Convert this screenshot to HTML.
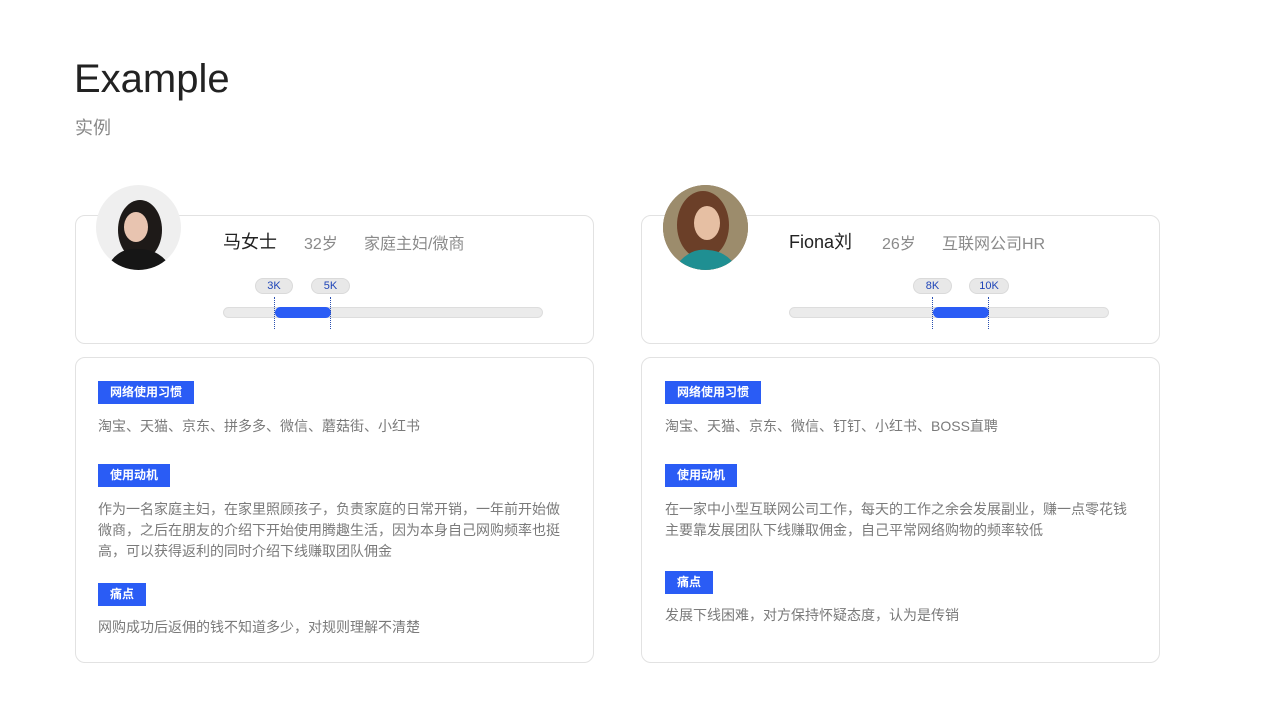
<!DOCTYPE html>
<html><head><meta charset="utf-8"><style>
*{margin:0;padding:0;box-sizing:border-box}
body{width:1280px;height:718px;background:#fff;position:relative;overflow:hidden;font-family:"Liberation Sans","Noto Sans CJK SC",sans-serif}
.a{position:absolute;white-space:nowrap}
.card{position:absolute;border:1px solid #e2e2e2;border-radius:10px;background:#fff}
.av{position:absolute;width:85px;height:85px;border-radius:50%;overflow:hidden}
.name{font-size:18px;color:#222}
.g{font-size:16px;color:#8a8a8a}
.track{position:absolute;height:11px;border-radius:6px;background:#ebebeb;border:1px solid #ddd}
.bar{position:absolute;height:11px;border-radius:6px;background:#2a5cf5}
.pill{position:absolute;height:16px;border-radius:8px;background:#e8e8e8;border:1px solid #dadada;color:#1f45b8;font-size:11px;line-height:14px;text-align:center}
.dl{position:absolute;width:0;border-left:1px dotted #2a4fb0;height:32px;top:297px}
.tag{position:absolute;height:23px;background:#2a5cf5;color:#fff;font-size:12px;line-height:23px;padding:0 12px;white-space:nowrap;font-weight:bold}
.t{position:absolute;font-size:14px;color:#7a7a7a;line-height:21px;white-space:nowrap}
</style></head><body>
<div class="a" style="left:74px;top:57px;font-size:40px;color:#222">Example</div>
<div class="a" style="left:75px;top:114px;font-size:18px;color:#888">实例</div>

<div class="card" style="left:75px;top:215px;width:519px;height:129px"></div>
<div class="card" style="left:75px;top:357px;width:519px;height:306px"></div>
<div class="card" style="left:641px;top:215px;width:519px;height:129px"></div>
<div class="card" style="left:641px;top:357px;width:519px;height:306px"></div>

<div class="av" style="left:96px;top:185px;background:#efefef">
<svg width="85" height="85"><ellipse cx="44" cy="45" rx="22" ry="30" fill="#1e1a18"/><ellipse cx="40" cy="42" rx="12" ry="15" fill="#e8c4b0"/><path d="M10 85 Q20 62 42 64 Q66 64 76 85Z" fill="#161616"/></svg></div>
<div class="av" style="left:663px;top:185px;background:#8a7a60">
<svg width="85" height="85"><rect width="85" height="85" fill="#9c8c6c"/><ellipse cx="40" cy="40" rx="26" ry="34" fill="#6b3f28"/><ellipse cx="44" cy="38" rx="13" ry="17" fill="#e6bfa3"/><path d="M10 85 Q25 62 45 65 Q65 66 75 85Z" fill="#1f8f92"/></svg></div>

<div class="a name" style="left:223px;top:228px">马女士</div>
<div class="a g" style="left:304px;top:230px">32岁</div>
<div class="a g" style="left:364px;top:230px">家庭主妇/微商</div>
<div class="track" style="left:223px;top:307px;width:320px"></div>
<div class="bar" style="left:275px;top:307px;width:56px"></div>
<div class="pill" style="left:255px;top:278px;width:38px">3K</div>
<div class="pill" style="left:311px;top:278px;width:39px">5K</div>
<div class="dl" style="left:274px"></div>
<div class="dl" style="left:330px"></div>

<div class="a name" style="left:789px;top:228px">Fiona刘</div>
<div class="a g" style="left:882px;top:230px">26岁</div>
<div class="a g" style="left:942px;top:230px">互联网公司HR</div>
<div class="track" style="left:789px;top:307px;width:320px"></div>
<div class="bar" style="left:933px;top:307px;width:56px"></div>
<div class="pill" style="left:913px;top:278px;width:39px">8K</div>
<div class="pill" style="left:969px;top:278px;width:40px">10K</div>
<div class="dl" style="left:932px"></div>
<div class="dl" style="left:988px"></div>

<div class="tag" style="left:98px;top:381px">网络使用习惯</div>
<div class="t" style="left:98px;top:416px">淘宝、天猫、京东、拼多多、微信、蘑菇街、小红书</div>
<div class="tag" style="left:98px;top:464px">使用动机</div>
<div class="t" style="left:98px;top:499px">作为一名家庭主妇，在家里照顾孩子，负责家庭的日常开销，一年前开始做<br>微商，之后在朋友的介绍下开始使用腾趣生活，因为本身自己网购频率也挺<br>高，可以获得返利的同时介绍下线赚取团队佣金</div>
<div class="tag" style="left:98px;top:583px">痛点</div>
<div class="t" style="left:98px;top:617px">网购成功后返佣的钱不知道多少，对规则理解不清楚</div>

<div class="tag" style="left:665px;top:381px">网络使用习惯</div>
<div class="t" style="left:665px;top:416px">淘宝、天猫、京东、微信、钉钉、小红书、BOSS直聘</div>
<div class="tag" style="left:665px;top:464px">使用动机</div>
<div class="t" style="left:665px;top:499px">在一家中小型互联网公司工作，每天的工作之余会发展副业，赚一点零花钱<br>主要靠发展团队下线赚取佣金，自己平常网络购物的频率较低</div>
<div class="tag" style="left:665px;top:571px">痛点</div>
<div class="t" style="left:665px;top:605px">发展下线困难，对方保持怀疑态度，认为是传销</div>
</body></html>
